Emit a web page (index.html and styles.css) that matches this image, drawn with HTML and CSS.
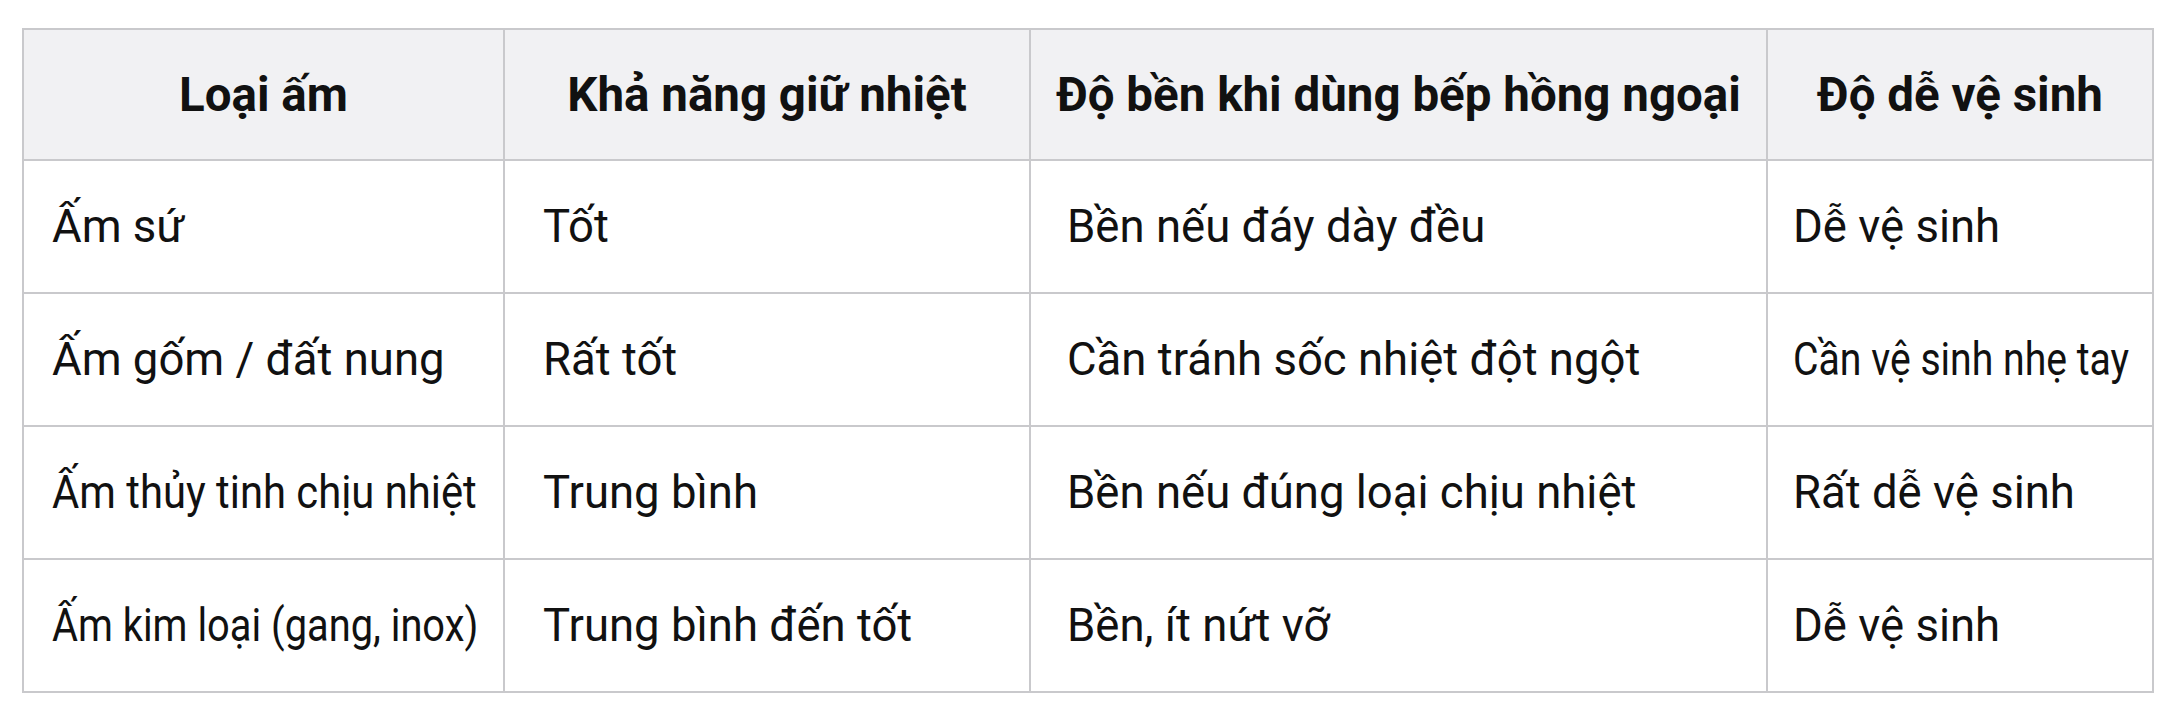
FILE: index.html
```html
<!DOCTYPE html>
<html lang="vi">
<head>
<meta charset="utf-8">
<title>So sánh các loại ấm</title>
<link rel="stylesheet" href="styles.css">
</head>
<body>
<table class="cmp">
  <colgroup>
    <col class="c1"><col class="c2"><col class="c3"><col class="c4">
  </colgroup>
  <thead>
    <tr>
      <th>Loại ấm</th>
      <th>Khả năng giữ nhiệt</th>
      <th>Độ bền khi dùng bếp hồng ngoại</th>
      <th>Độ dễ vệ sinh</th>
    </tr>
  </thead>
  <tbody>
    <tr>
      <td class="p1">Ấm sứ</td>
      <td class="p2">Tốt</td>
      <td class="p3">Bền nếu đáy dày đều</td>
      <td class="p4">Dễ vệ sinh</td>
    </tr>
    <tr>
      <td class="p1">Ấm gốm / đất nung</td>
      <td class="p2">Rất tốt</td>
      <td class="p3">Cần tránh sốc nhiệt đột ngột</td>
      <td class="p4"><span class="cond cond-c">Cần vệ sinh nhẹ tay</span></td>
    </tr>
    <tr>
      <td class="p1"><span class="cond cond-a">Ấm thủy tinh chịu nhiệt</span></td>
      <td class="p2">Trung bình</td>
      <td class="p3">Bền nếu đúng loại chịu nhiệt</td>
      <td class="p4">Rất dễ vệ sinh</td>
    </tr>
    <tr>
      <td class="p1"><span class="cond cond-b">Ấm kim loại (gang, inox)</span></td>
      <td class="p2">Trung bình đến tốt</td>
      <td class="p3">Bền, ít nứt vỡ</td>
      <td class="p4">Dễ vệ sinh</td>
    </tr>
  </tbody>
</table>
</body>
</html>
```
FILE: styles.css
```css
html, body {
  margin: 0;
  padding: 0;
  background: #ffffff;
}
body {
  padding: 28px 0 0 22px;
  font-family: Roboto, "Noto Sans", sans-serif;
  color: #111111;
}
.cmp {
  border-collapse: collapse;
  table-layout: fixed;
  width: 2130px;
}
.c1 { width: 481px; }
.c2 { width: 526px; }
.c3 { width: 737px; }
.c4 { width: 386px; }
.cmp th,
.cmp td {
  border: 2px solid #c9c9cc;
  padding: 0;
  vertical-align: middle;
  white-space: nowrap;
  overflow: hidden;
}
.cmp th {
  height: 129px;
  background: #f1f1f3;
  font-weight: 700;
  font-size: 47.5px;
  text-align: center;
  letter-spacing: 0;
}
.cmp td {
  height: 131px;
  font-size: 45.5px;
  font-weight: 400;
  text-align: left;
}
.cmp td.p1 { padding-left: 28px; }
.cmp td.p2 { padding-left: 38px; }
.cmp td.p3 { padding-left: 36px; }
.cmp td.p4 { padding-left: 25px; }
.cond {
  display: inline-block;
  transform-origin: left center;
}
.cond-a { transform: scaleX(0.918); }
.cond-b { transform: scaleX(0.875); }
.cond-c { transform: scaleX(0.861); }
```
